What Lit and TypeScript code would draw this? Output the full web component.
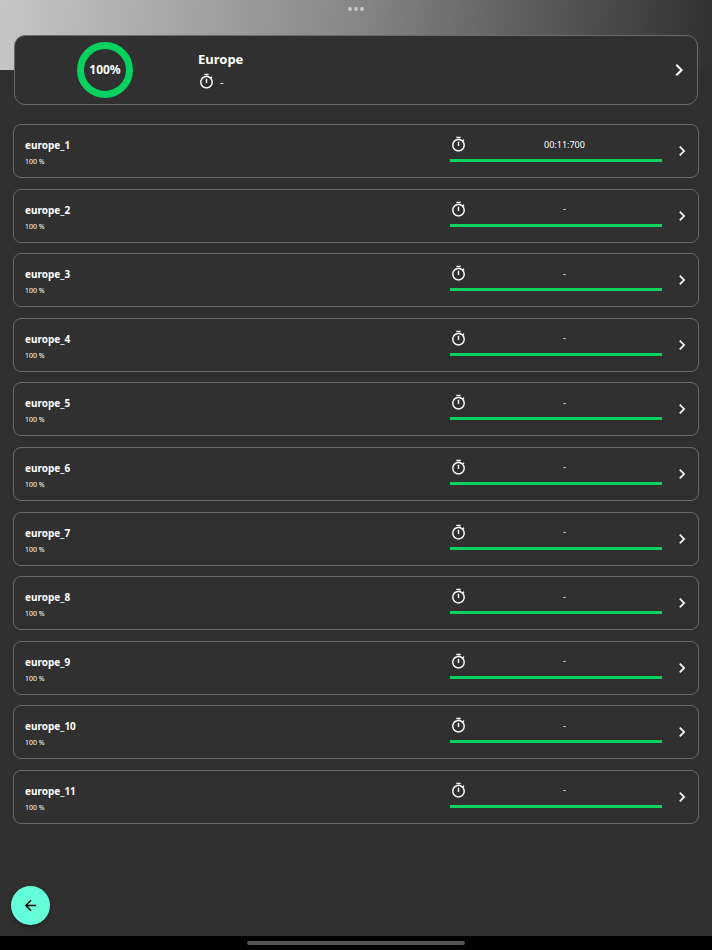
import { LitElement, html, css, svg } from "lit";
import { customElement, property } from "lit/decorators.js";

const timerIcon = html`<svg class="timer" viewBox="0 0 24 24" aria-hidden="true">
  ${svg`<path fill="currentColor" d="M15 1H9v2h6V1zm-4 13h2V8h-2v6zm8.03-6.61l1.42-1.42c-.43-.51-.9-.99-1.41-1.41l-1.42 1.42C16.07 4.74 14.12 4 12 4c-4.97 0-9 4.03-9 9s4.02 9 9 9 9-4.03 9-9c0-2.12-.74-4.07-1.97-5.61zM12 20c-3.87 0-7-3.13-7-7s3.13-7 7-7 7 3.13 7 7-3.13 7-7 7z"/>`}
</svg>`;

const chevronIcon = html`<svg class="chevron" viewBox="0 0 24 24" aria-hidden="true">
  ${svg`<path fill="currentColor" d="M8.59 16.59L13.17 12 8.59 7.41 10 6l6 6-6 6z"/>`}
</svg>`;

interface Level {
  name: string;
  percent: number;
  time: string;
}

const levels: Level[] = Array.from({ length: 11 }, (_, i) => ({
  name: `europe_${i + 1}`,
  percent: 100,
  time: i === 0 ? "00:11:700" : "-",
}));

@customElement("level-row")
class LevelRow extends LitElement {
  @property({ attribute: false }) level!: Level;

  static styles = css`
    :host {
      display: block;
    }
    .card {
      box-sizing: border-box;
      height: 54px;
      display: grid;
      grid-template-columns: 1fr 31% 36px;
      border: 1px solid #6b6b6b;
      border-radius: 8px;
      color: #fff;
      text-decoration: none;
    }
    .info {
      padding: 12px 0 0 11px;
    }
    .name {
      font-size: 10px;
      line-height: 16px;
      font-weight: 700;
    }
    .percent {
      margin-top: 3px;
      font-size: 7px;
      line-height: 11px;
    }
    .result {
      padding-top: 11px;
    }
    .line {
      display: flex;
      align-items: center;
      height: 17px;
    }
    .time {
      flex: 1;
      text-align: center;
      font-size: 9px;
      line-height: 16px;
    }
    .track {
      margin-top: 6px;
      height: 3px;
      background: #484848;
    }
    .fill {
      height: 100%;
      background: #06d25f;
    }
    .timer {
      width: 17px;
      height: 17px;
    }
    .chevron {
      width: 20px;
      height: 20px;
      align-self: center;
      justify-self: end;
      margin-right: 6px;
    }
  `;

  render() {
    const { name, percent, time } = this.level;
    return html`<a class="card" href="#${name}">
      <div class="info">
        <div class="name">${name}</div>
        <div class="percent">${percent} %</div>
      </div>
      <div class="result">
        <div class="line">${timerIcon}<span class="time">${time}</span></div>
        <div class="track" role="progressbar" aria-label=${name} aria-valuenow=${percent}>
          <div class="fill" style="width:${percent}%"></div>
        </div>
      </div>
      ${chevronIcon}
    </a>`;
  }
}

@customElement("app-root")
class AppRoot extends LitElement {
  static styles = css`
    :host {
      display: flex;
      flex-direction: column;
      min-height: 100vh;
      background: #303030;
      color: #fff;
      font-family: "Noto Sans", sans-serif;
    }
    .banner {
      height: 70px;
      background: linear-gradient(96deg, #c6c6c6, #868686 50%, #303030);
    }
    .dots {
      display: flex;
      justify-content: center;
      gap: 2px;
      padding-top: 7px;
    }
    .dot {
      width: 4px;
      height: 4px;
      border-radius: 50%;
      background: #c8c8c8;
    }
    .summary {
      box-sizing: border-box;
      height: 70px;
      margin: -35px 14px 0;
      display: grid;
      grid-template-columns: 180px 1fr 36px;
      column-gap: 3px;
      align-items: center;
      border: 1px solid #6b6b6b;
      border-radius: 11px;
      background: #303030;
      color: #fff;
      text-decoration: none;
    }
    .ring {
      box-sizing: border-box;
      width: 56px;
      height: 56px;
      border: 7px solid #06d25f;
      border-radius: 50%;
      display: grid;
      place-items: center;
      justify-self: center;
      font-size: 12px;
      line-height: 16px;
      font-weight: 700;
    }
    .title {
      margin: 0;
      font-size: 13px;
      line-height: 18px;
      font-weight: 700;
    }
    .best {
      display: flex;
      align-items: center;
      gap: 5px;
      margin-top: 5px;
      font-size: 11px;
      line-height: 16px;
    }
    .timer {
      width: 17px;
      height: 17px;
    }
    .chevron {
      width: 24px;
      height: 24px;
      justify-self: center;
    }
    .levels {
      flex: 1;
      display: flex;
      flex-direction: column;
      justify-content: space-between;
      margin: 19px 13px 62px;
      padding: 0;
      list-style: none;
    }
    .actions {
      padding: 0 11px 11px;
      display: flex;
    }
    .back {
      width: 39px;
      height: 39px;
      padding: 0;
      border: 0;
      border-radius: 50%;
      display: grid;
      place-items: center;
      background: #64ffda;
      color: #000;
      box-shadow: 0 2px 4px rgba(0, 0, 0, 0.35);
    }
    .arrow {
      width: 17px;
      height: 17px;
    }
    .system {
      height: 14px;
      background: #000;
      display: flex;
      justify-content: center;
      align-items: center;
    }
    .handle {
      width: 31%;
      max-width: 218px;
      height: 4px;
      border-radius: 2px;
      background: #555;
    }
  `;

  render() {
    return html`
      <div class="banner">
        <div class="dots">
          <span class="dot"></span><span class="dot"></span><span class="dot"></span>
        </div>
      </div>
      <a class="summary" href="#europe">
        <div class="ring">100%</div>
        <div>
          <h1 class="title">Europe</h1>
          <div class="best">${timerIcon}<span>-</span></div>
        </div>
        ${chevronIcon}
      </a>
      <ul class="levels">
        ${levels.map((l) => html`<li><level-row .level=${l}></level-row></li>`)}
      </ul>
      <div class="actions">
        <button class="back" aria-label="Back">
          <svg class="arrow" viewBox="0 0 24 24" aria-hidden="true">
            <path fill="currentColor" d="M20 11H7.83l5.59-5.59L12 4l-8 8 8 8 1.41-1.41L7.83 13H20v-2z" />
          </svg>
        </button>
      </div>
      <div class="system"><div class="handle"></div></div>
    `;
  }
}
